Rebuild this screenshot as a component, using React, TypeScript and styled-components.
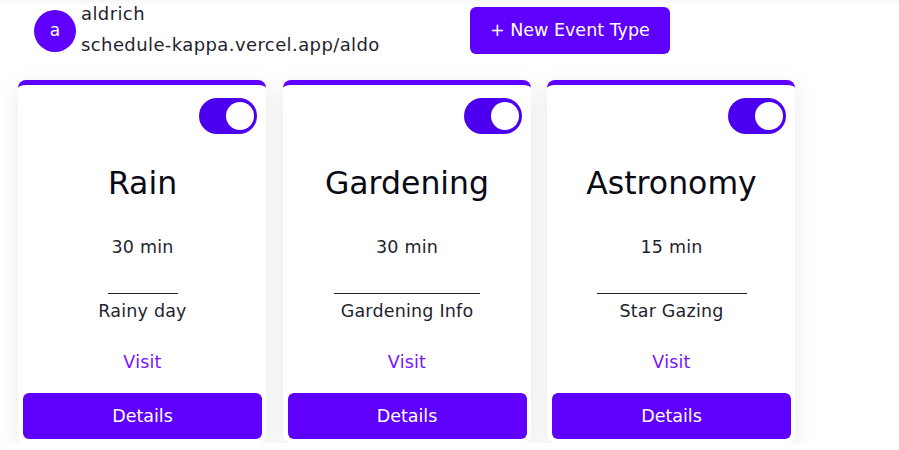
import styled, { createGlobalStyle } from 'styled-components';

const PRIMARY = '#5f00ff';

const GlobalStyle = createGlobalStyle`
  body {
    margin: 0;
    background: #fff;
    font-family: 'DejaVu Sans', 'Open Sans', sans-serif;
    color: #1f1f2e;
  }
`;

const events = [
  { title: 'Rain', duration: '30 min', description: 'Rainy day', rule: 70 },
  { title: 'Gardening', duration: '30 min', description: 'Gardening Info', rule: 146 },
  { title: 'Astronomy', duration: '15 min', description: 'Star Gazing', rule: 150 },
];

function Toggle() {
  return (
    <ToggleTrack>
      <ToggleKnob />
    </ToggleTrack>
  );
}

function EventCard({ title, duration, description, rule }: (typeof events)[number]) {
  return (
    <Card>
      <ToggleRow>
        <Toggle />
      </ToggleRow>
      <Title>{title}</Title>
      <Duration>{duration}</Duration>
      <Rule $width={rule} />
      <Description>{description}</Description>
      <VisitLink href="#">Visit</VisitLink>
      <DetailsButton type="button">Details</DetailsButton>
    </Card>
  );
}

export default function App() {
  return (
    <>
      <GlobalStyle />
      <Header>
        <Profile>
          <Avatar>a</Avatar>
          <ProfileText>
            <span>aldrich</span>
            <span>schedule-kappa.vercel.app/aldo</span>
          </ProfileText>
        </Profile>
        <NewButton type="button">+ New Event Type</NewButton>
      </Header>
      <CardGrid>
        {events.map((e) => (
          <EventCard key={e.title} {...e} />
        ))}
      </CardGrid>
    </>
  );
}

const Header = styled.header`
  display: flex;
  align-items: center;
  height: 61px;
  padding-left: 34px;
  box-shadow: inset 0 5px 5px -3px rgba(0, 0, 0, 0.04);
`;

const Profile = styled.div`
  display: flex;
  align-items: center;
  gap: 5px;
  width: 436px;
`;

const Avatar = styled.div`
  width: 42px;
  height: 42px;
  border-radius: 50%;
  background: ${PRIMARY};
  color: #fff;
  display: flex;
  align-items: center;
  justify-content: center;
  font-size: 17px;
  padding-bottom: 2px;
  box-sizing: border-box;
`;

const ProfileText = styled.div`
  display: flex;
  flex-direction: column;
  font-size: 18px;
  letter-spacing: 0.4px;
  line-height: 31px;
  padding-bottom: 3px;
  color: #1f1f2e;
`;

const NewButton = styled.button`
  height: 47px;
  padding: 0 20px;
  border: none;
  border-radius: 6px;
  background: ${PRIMARY};
  color: #fff;
  font-family: inherit;
  font-size: 17.5px;
  margin-top: -1px;
`;

const CardGrid = styled.main`
  display: grid;
  grid-template-columns: repeat(3, 248px);
  column-gap: 16.5px;
  padding: 19px 0 0 18px;
`;

const Card = styled.section`
  display: flex;
  flex-direction: column;
  align-items: center;
  background: #fff;
  border-top: 5px solid ${PRIMARY};
  border-radius: 8px;
  padding: 0 4px 4px 5px;
  box-shadow: 0 6px 24px rgba(0, 0, 0, 0.09);
  font-size: 17.5px;
  letter-spacing: 0.2px;
`;

const ToggleRow = styled.div`
  align-self: stretch;
  display: flex;
  justify-content: flex-end;
  padding: 13px 5px 0 0;
`;

const ToggleTrack = styled.div`
  width: 58px;
  height: 36px;
  border-radius: 18px;
  background: #4b00f0;
  display: flex;
  align-items: center;
  justify-content: flex-end;
  padding-right: 3px;
  box-sizing: border-box;
`;

const ToggleKnob = styled.span`
  width: 28px;
  height: 28px;
  border-radius: 50%;
  background: #fff;
`;

const Title = styled.h2`
  margin: 29px 0 0;
  font-size: 31.5px;
  letter-spacing: 0;
  line-height: 40px;
  font-weight: 400;
  color: #0a0a14;
`;

const Duration = styled.div`
  margin-top: 31px;
  line-height: 26px;
`;

const Rule = styled.div<{ $width: number }>`
  width: ${(p) => p.$width}px;
  height: 1px;
  margin-top: 33px;
  background: #222;
`;

const Description = styled.div`
  margin-top: 4px;
  line-height: 26px;
`;

const VisitLink = styled.a`
  margin-top: 25px;
  line-height: 26px;
  color: #7a12ff;
  text-decoration: none;
`;

const DetailsButton = styled.button`
  align-self: stretch;
  margin-top: 18px;
  height: 46px;
  border: none;
  border-radius: 6px;
  background: ${PRIMARY};
  color: #fff;
  font-family: inherit;
  font-size: 17.5px;
`;
